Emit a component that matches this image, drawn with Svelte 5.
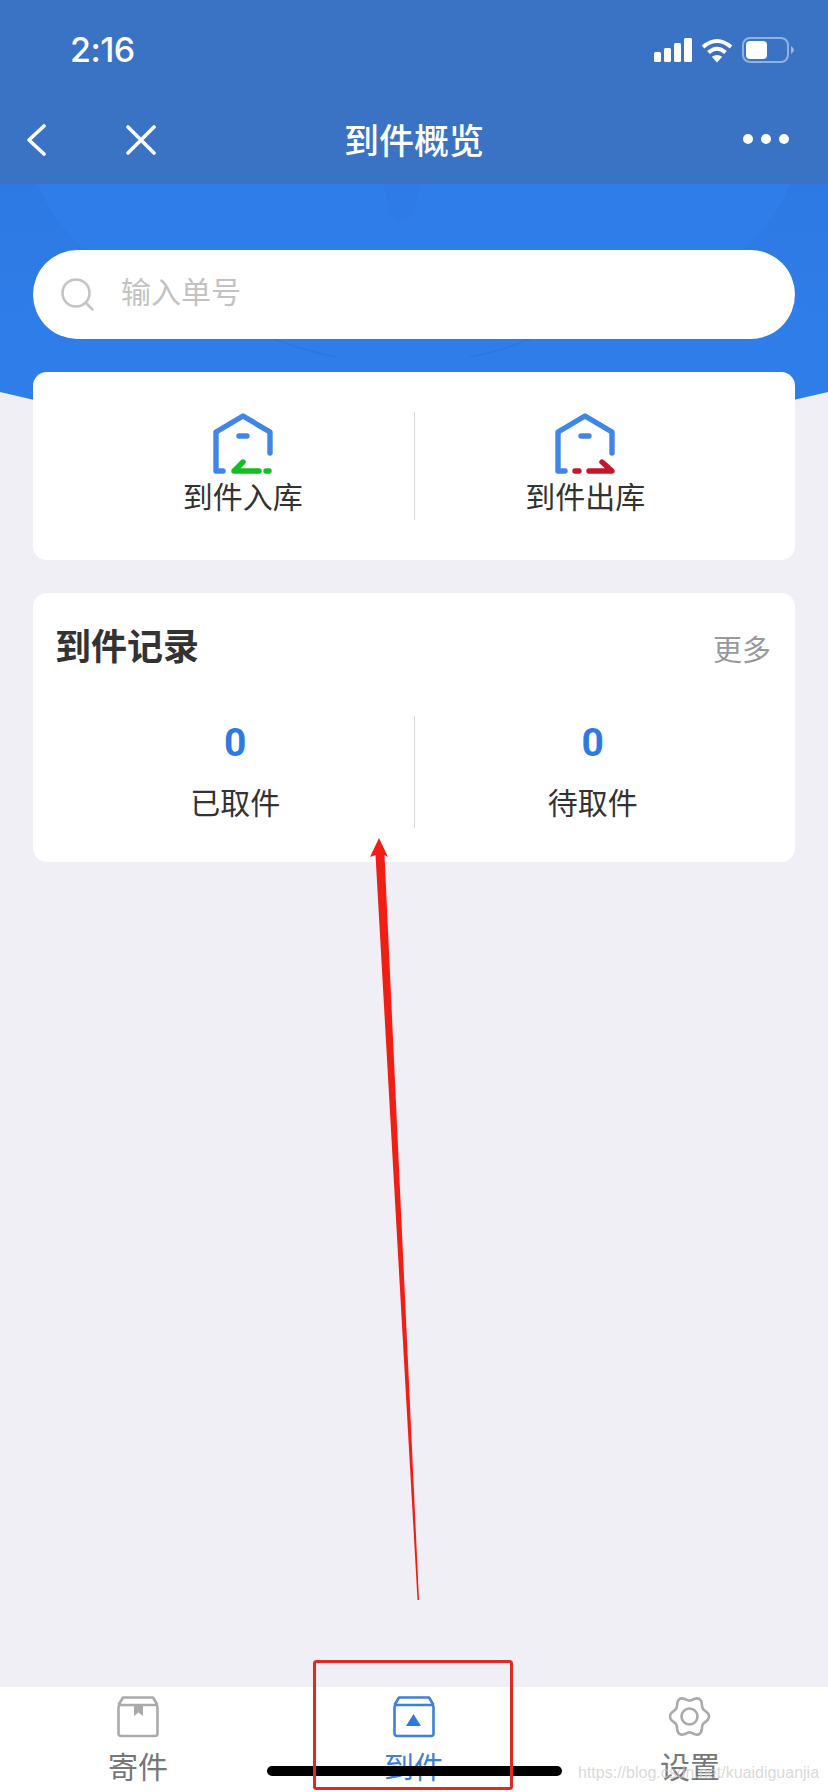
<script>
	// six soft lobes for the settings gear
	const gearPath = () => {
		let points = []
		for (let i = 0; i < 120; i++) {
			const a = (i / 120) * Math.PI * 2
			const r = 17.4 + 2.1 * Math.cos(6 * a)
			points.push(`${(20.5 + r * Math.cos(a)).toFixed(2)} ${(20.5 + 1.04 * r * Math.sin(a)).toFixed(2)}`)
		}
		return `M${points.join("L")}Z`
	}

	const tabs = [
		{ label: "寄件", kind: "send" },
		{ label: "到件", kind: "receive", active: true },
		{ label: "设置", kind: "gear" }
	]

	const records = [
		{ label: "已取件", count: 0 },
		{ label: "待取件", count: 0 }
	]
</script>

<div class="page">
	<header>
		<div class="status">
			<span class="time">2:16</span>
			<div class="status-icons">
				<svg width="38" height="24" viewBox="0 0 38 24" fill="#fff">
					<rect x="0" y="14" width="7" height="10" rx="1.5" />
					<rect x="10" y="10" width="7" height="14" rx="1.5" />
					<rect x="20" y="5" width="7" height="19" rx="1.5" />
					<rect x="30" y="0" width="8" height="24" rx="1.5" />
				</svg>
				<svg width="32" height="25" viewBox="0 0 32 25" fill="none" stroke="#fff" stroke-width="4">
					<path d="M2 9 Q16 -3 30 9" />
					<path d="M7.5 14.5 Q16 7 24.5 14.5" />
					<path d="M16 24.5 L10.8 18.8 Q16 15 21.2 18.8 Z" fill="#fff" stroke="none" />
				</svg>
				<svg width="52" height="26" viewBox="0 0 52 26" fill="none">
					<rect x="1" y="1" width="45" height="24" rx="7" stroke="#fff" stroke-opacity="0.45" stroke-width="2" />
					<rect x="4" y="4" width="21" height="18" rx="4" fill="#fff" />
					<path d="M49 9 Q52 11 52 13 Q52 15 49 17 Z" fill="#fff" fill-opacity="0.5" />
				</svg>
			</div>
		</div>
		<nav>
			<div class="nav-left">
				<svg width="20" height="32" viewBox="0 0 20 32" fill="none" stroke="#fff" stroke-width="3.6" stroke-linecap="round" stroke-linejoin="round">
					<path d="M18 2 L3 16 L18 30" />
				</svg>
				<svg width="30" height="30" viewBox="0 0 30 30" fill="none" stroke="#fff" stroke-width="3.6" stroke-linecap="round">
					<path d="M2 2 L28 28 M28 2 L2 28" />
				</svg>
			</div>
			<h1>到件概览</h1>
			<div class="dots"><i></i><i></i><i></i></div>
		</nav>
	</header>

	<main>
		<svg class="backdrop" width="828" height="270" viewBox="0 0 828 270">
			<defs>
				<linearGradient id="fade" x1="0" y1="0" x2="0" y2="1">
					<stop offset="0" stop-color="#2468d0" stop-opacity="0.18" />
					<stop offset="1" stop-color="#2468d0" stop-opacity="0" />
				</linearGradient>
			</defs>
			<path d="M0 0 H828 V208 Q414 308 0 208 Z" fill="#2f7de8" />
			<path d="M0 0 H38 Q52 36 85 66 L30 120 L0 150 Z" fill="url(#fade)" />
			<path d="M828 0 H790 Q776 36 743 66 L798 120 L828 150 Z" fill="url(#fade)" />
			<path d="M383 0 H420 L414 30 L402 38 L390 30 Z" fill="#2468d0" fill-opacity="0.05" />
			<g fill="none" stroke="#2468d0" stroke-opacity="0.3" stroke-width="1.5">
				<path d="M273 155 Q310 168 336 173" />
				<path d="M530 155 Q500 168 470 173" />
			</g>
		</svg>

		<div class="search">
			<svg width="33" height="33" viewBox="0 0 33 33" fill="none" stroke="#c4c4c4" stroke-width="2.6" stroke-linecap="round">
				<circle cx="15" cy="15" r="13.5" />
				<path d="M25 25 L31.5 31.5" />
			</svg>
			<span>输入单号</span>
		</div>

		<section class="card actions">
			<div class="action left">
				<svg width="60" height="62" viewBox="0 0 60 62" fill="none" stroke-width="5.4" stroke-linecap="round" stroke-linejoin="round">
					<path d="M10 58 H3 V19 L30 3 L57 19 V40 M26 23 H34" stroke="#3f86e8" />
					<path d="M46 58 H21 L30 49 M53 58 H56" stroke="#12bf1e" />
				</svg>
				<span>到件入库</span>
			</div>
			<div class="rule"></div>
			<div class="action right">
				<svg width="60" height="62" viewBox="0 0 60 62" fill="none" stroke-width="5.4" stroke-linecap="round" stroke-linejoin="round">
					<path d="M10 58 H3 V19 L30 3 L57 19 V40 M26 23 H34" stroke="#3f86e8" />
					<path d="M20 58 H24 M34 58 H57 L47 49" stroke="#c4172c" />
				</svg>
				<span>到件出库</span>
			</div>
		</section>

		<section class="card records">
			<div class="records-head">
				<h2>到件记录</h2>
				<span class="more">更多</span>
			</div>
			<div class="stats">
				{#each records as record, i}
					{#if i > 0}<div class="rule"></div>{/if}
					<div class="stat">
						<strong>{record.count}</strong>
						<span>{record.label}</span>
					</div>
				{/each}
			</div>
		</section>
	</main>

	<footer>
		{#each tabs as tab}
			<div class={{ tab: true, active: tab.active }}>
				<svg width="42" height="42" viewBox="0 0 42 42" fill="none" stroke="currentColor" stroke-width="2.6" stroke-linejoin="round">
					{#if tab.kind === "gear"}
						<path d={gearPath()} />
						<circle cx="20.5" cy="20.5" r="8" />
					{:else}
						<rect x="1.5" y="9" width="39" height="31" rx="2.5" />
						<path d="M1.5 9 L6 1.5 H36 L40.5 9" />
						{#if tab.kind === "send"}
							<path d="M17 9 H26 V20 L21.5 16.5 L17 20 Z" fill="currentColor" stroke="none" />
						{:else}
							<path d="M20.5 18 L28 30 H13 Z" fill="#2f7ae0" stroke="none" />
						{/if}
					{/if}
				</svg>
				<span>{tab.label}</span>
			</div>
		{/each}
	</footer>

	<div class="home-bar"></div>
	<span class="watermark">https://blog.csdn.net/kuaidiguanjia</span>

	<!-- red annotation drawn over the screenshot -->
	<svg class="markup" width="828" height="1792" viewBox="0 0 828 1792">
		<path d="M379 838 L388 857 L384.5 855 L419 1600 L417.5 1600 L375.5 855 L370 857 Z" fill="#f01e14" />
		<rect x="314.5" y="1661.5" width="197" height="127" rx="2" fill="none" stroke="#dd2a22" stroke-width="3" />
	</svg>
</div>

<style>
	:global(body) {
		margin: 0;
	}

	.page {
		position: relative;
		display: flex;
		flex-direction: column;
		width: 828px;
		height: 1792px;
		overflow: hidden;
		background: #f0eff6;
		color: #333;
		font-family: "Noto Sans CJK SC", "Liberation Sans", sans-serif;
	}

	header {
		height: 184px;
		background: #3a73c4;
		color: #fff;
	}

	.status {
		display: flex;
		justify-content: space-between;
		align-items: center;
		height: 100px;
		padding: 0 34px 0 70px;
	}

	.time {
		margin-top: -2px;
		font-family: Inter, "Liberation Sans", sans-serif;
		font-size: 34px;
		font-weight: 500;
		letter-spacing: -0.5px;
	}

	.status-icons {
		display: flex;
		align-items: center;
		gap: 9px;
	}

	nav {
		display: grid;
		grid-template-columns: 1fr auto 1fr;
		align-items: center;
		height: 80px;
		padding: 0 26px;
	}

	.nav-left {
		display: flex;
		align-items: center;
		gap: 80px;
	}

	h1 {
		margin: 0 0 4px;
		font-size: 35px;
		font-weight: 500;
	}

	.dots {
		display: flex;
		justify-content: flex-end;
		gap: 7.5px;
		padding-right: 13px;
		margin-top: -2px;
	}

	.dots i {
		width: 10.5px;
		height: 10.5px;
		border-radius: 50%;
		background: #fff;
	}

	main {
		position: relative;
		display: flex;
		flex-direction: column;
		flex: 1;
		padding: 66px 33px 0;
	}

	.backdrop {
		position: absolute;
		top: 0;
		left: 0;
	}

	.search {
		position: relative;
		display: flex;
		align-items: center;
		gap: 27px;
		box-sizing: border-box;
		height: 89px;
		margin-bottom: 33px;
		padding-left: 28px;
		border-radius: 45px;
		background: #fff;
		color: #c2c2c2;
		font-size: 30px;
	}

	.search span {
		padding-bottom: 9px;
	}

	.card {
		position: relative;
		box-sizing: border-box;
		border-radius: 14px;
		background: #fff;
	}

	.rule {
		width: 1px;
		background: #d6d6d6;
	}

	.actions {
		display: grid;
		grid-template-columns: 1fr 1px 1fr;
		height: 188px;
		margin-bottom: 33px;
		padding: 40px 39px;
	}

	.action {
		display: flex;
		flex-direction: column;
		align-items: center;
		padding-top: 1px;
		font-size: 30px;
		line-height: 40px;
	}

	.action span {
		white-space: nowrap;
	}

	.records {
		height: 269px;
		padding: 0 24px;
	}

	.records-head {
		display: flex;
		justify-content: space-between;
		align-items: center;
		height: 108px;
		margin-bottom: 15px;
	}

	h2 {
		margin: -6px 0 0 -2px;
		font-size: 36px;
		font-weight: 700;
	}

	.more {
		margin-top: 2px;
		color: #999;
		font-size: 29px;
	}

	.stats {
		display: grid;
		grid-template-columns: 1fr 1px 1fr;
		height: 112px;
	}

	.stat {
		display: flex;
		flex-direction: column;
		align-items: center;
		font-size: 30px;
	}

	.stat strong {
		margin-top: 2px;
		color: #2f7ae0;
		font-family: Roboto, "Liberation Sans", sans-serif;
		font-size: 39px;
		font-weight: 700;
		line-height: 50px;
	}

	.stat span {
		margin-top: 13px;
		line-height: 40px;
	}

	footer {
		display: grid;
		grid-template-columns: repeat(3, 1fr);
		height: 105px;
		background: #fff;
	}

	.tab {
		display: flex;
		flex-direction: column;
		align-items: center;
		padding-top: 9px;
		color: #aaa;
	}

	.tab span {
		margin-top: 7px;
		color: #777;
		font-size: 30px;
		line-height: 40px;
	}

	.tab.active {
		color: #3f7fd6;
	}

	.tab.active span {
		color: #3f7fd6;
	}

	.home-bar {
		position: absolute;
		left: 267px;
		top: 1766px;
		width: 295px;
		height: 10px;
		border-radius: 5px;
		background: #000;
	}

	.watermark {
		position: absolute;
		left: 578px;
		top: 1761px;
		color: rgba(200, 200, 200, 0.7);
		font-family: "Liberation Sans", sans-serif;
		font-size: 16px;
		line-height: 24px;
	}

	.markup {
		position: absolute;
		top: 0;
		left: 0;
		pointer-events: none;
	}
</style>
